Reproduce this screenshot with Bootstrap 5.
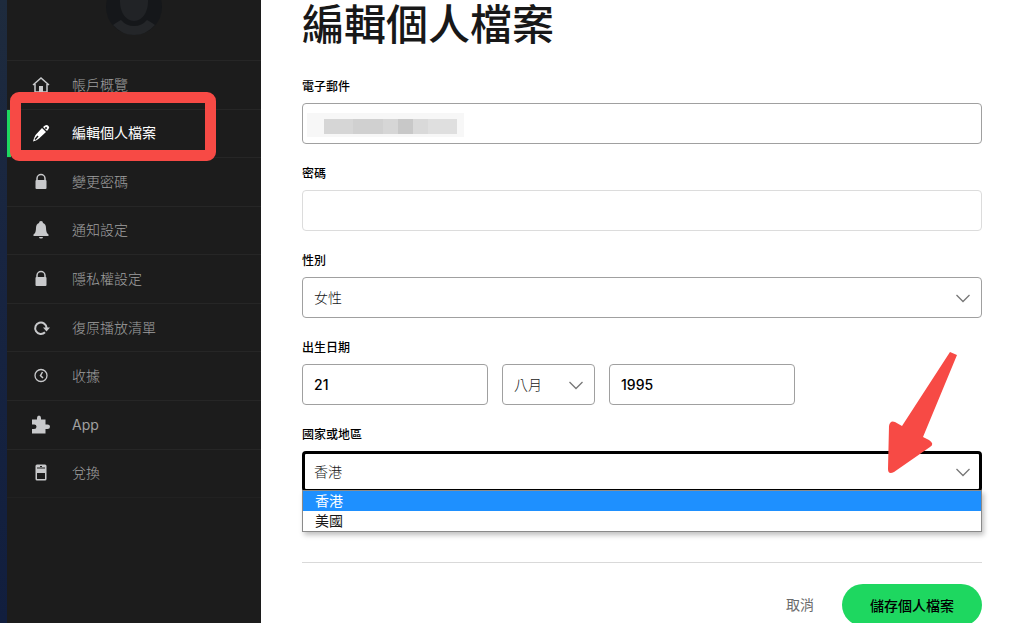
<!DOCTYPE html>
<html lang="zh-Hant">
<head>
<meta charset="utf-8">
<meta name="viewport" content="width=device-width, initial-scale=1">
<title>編輯個人檔案</title>
<link href="https://cdn.jsdelivr.net/npm/bootstrap@5.3.0/dist/css/bootstrap.min.css" rel="stylesheet">
<style>
  body { font-family: Inter, "Noto Sans CJK TC", sans-serif; font-size: 14px; line-height: 20px; color: #181818; }
  .shell { height: 100vh; }
  .edge { width: 7px; background: linear-gradient(#1e2b3d, #182541 40%, #111e3e); }
  .side { width: 254px; background: #1c1c1c; }
  .avatar-area { height: 60px; }
  .side-menu { height: 438px; }
  .side-menu li { border-top: 1px solid #262626; flex: 1 1 0; }
  .side-menu li:last-child { border-bottom: 1px solid #212121; }
  .side-menu a { color: #a0a0a0; padding-left: 24px; gap: 21px; font-weight: 300; }
  .side-menu a.current { color: #fff; font-weight: 400; box-shadow: inset 4px 0 #1ed760; }
  .side-menu svg { width: 20px; height: 20px; fill: #c8c9cb; stroke: none; }
  .side-menu .line { fill: none; stroke: #c8c9cb; }
  .ring { inset: -18px 45px -4px 3px; border: 11px solid #f74a45; border-radius: 9px; pointer-events: none; z-index: 2; }
  .content { padding: 0 42px 0 41px; }
  h1 { font-size: 42px; line-height: 50px; font-weight: 500; margin-bottom: 27px; }
  .field { margin-bottom: 20px; }
  .form-label, legend.form-label { font-size: 12px; line-height: 20px; font-weight: 500; margin-bottom: 6px; float: none; color: #000; }
  .form-control, .form-select { height: 41px; font-size: 14px; line-height: 20px; padding: 9px 11px; border: 1px solid #a0a0a0; border-radius: 4px; color: #000; }
  .form-control { font-weight: 500; }
  .form-control.soft { border-color: #dcdcdc; }
  .form-select { font-weight: 300; padding-right: 36px; color: #181818; background-position: right 10px center; background-size: 16px 16px;
    background-image: url("data:image/svg+xml,%3Csvg xmlns='http://www.w3.org/2000/svg' viewBox='0 0 16 16'%3E%3Cpath d='M1.500 5l6.500 6.500L14.500 5' fill='none' stroke='%23777' stroke-width='1.300'/%3E%3C/svg%3E"); }
  .form-select.open { border: 3px solid #000; padding: 7px 33px 7px 9px; background-position: right 8px center; }
  .masked { left: 5px; top: 10px; width: 157px; height: 24px; background: #f7f7f7; padding: 6px 7px 3px 17px; }
  .options { top: 39px; z-index: 2; background: #fff; border: 1px solid #8a8a8a; box-shadow: 2px 3px 5px rgba(0,0,0,.25); }
  .options li { padding-left: 12px; }
  .options .chosen { background: #1e90ff; color: #fff; }
  .pointer { width: 80px; height: 130px; right: 20px; top: -105px; z-index: 3; pointer-events: none; }
  .year, .day { width: 186px; }
  .month { width: 93px; }
  .actions { border-top: 1px solid #d9d9d9; margin-top: 70px; padding-top: 21px; gap: 28px; }
  .actions a { color: #6a6a6a; }
  .btn-save { height: 42px; padding: 0 28px; border-radius: 21px; font-size: 14px; font-weight: 500; background: #1ed760; color: #000; }
</style>
</head>
<body>
<div class="shell d-flex overflow-hidden">
  <div class="edge flex-shrink-0"></div>
  <aside class="side flex-shrink-0">
    <div class="avatar-area d-flex justify-content-center align-items-start">
      <svg width="56" height="35" viewBox="0 21 56 35" aria-hidden="true">
        <circle cx="28" cy="28" r="28" fill="#15171a"/>
        <path d="M14 23C14 32 19 42 28 42S42 32 42 23V0H14Z" fill="#212326"/>
        <path d="M7 46Q11 43 15 41Q20 47 28 47T41 41Q45 43 49 46Q40 56 28 56T7 46Z" fill="#242629"/>
      </svg>
    </div>
    <nav>
      <ul class="side-menu list-unstyled d-flex flex-column mb-0">
        <li><a href="#" class="d-flex h-100 align-items-center text-decoration-none">
          <svg viewBox="0 0 20 20"><path class="line" stroke-width="1.500" d="M2 10L10 3L18 10M4 9V17H16V9"/><path d="M8 11H12V17H8Z"/></svg>帳戶概覽</a></li>
        <li class="position-relative"><a href="#" class="current d-flex h-100 align-items-center text-decoration-none" aria-current="page">
          <svg viewBox="0 0 20 20"><path fill="#fff" d="M11 5L15 9L8 15.500Q6 17.500 2 18.500Q3 14.500 4.500 12ZM12 4L14 2.500Q16 1.500 17.500 3T17.500 6L16 8Z"/><path d="M4 16.500L7 13" stroke="#1c1c1c" stroke-width="1.500"/><circle cx="15" cy="5" r="1" fill="#1c1c1c"/></svg>編輯個人檔案</a>
          <div class="ring position-absolute"></div></li>
        <li><a href="#" class="d-flex h-100 align-items-center text-decoration-none">
          <svg viewBox="0 0 20 20"><path class="line" stroke-width="1.500" d="M6 9V6.500a4 4 0 0 1 8 0V9"/><rect x="4.500" y="8" width="11" height="9" rx="1"/></svg>變更密碼</a></li>
        <li><a href="#" class="d-flex h-100 align-items-center text-decoration-none">
          <svg viewBox="0 0 20 20"><path d="M10 1Q12 1 12 3Q15 4 15 8Q15 13 17.500 14.500V16H2.500V14.500Q5 13 5 8Q5 4 8 3Q8 1 10 1ZM8 17H12Q12 18.500 10 18.500T8 17Z"/></svg>通知設定</a></li>
        <li><a href="#" class="d-flex h-100 align-items-center text-decoration-none">
          <svg viewBox="0 0 20 20"><path class="line" stroke-width="1.500" d="M6 9V6.500a4 4 0 0 1 8 0V9"/><rect x="4.500" y="8" width="11" height="9" rx="1"/></svg>隱私權設定</a></li>
        <li><a href="#" class="d-flex h-100 align-items-center text-decoration-none">
          <svg viewBox="0 0 20 20"><path class="line" stroke-width="2" d="M14 14.200A5.700 5.700 0 1 1 15.600 10"/><path d="M12 9.500H19L15.500 13.500Z"/></svg>復原播放清單</a></li>
        <li><a href="#" class="d-flex h-100 align-items-center text-decoration-none">
          <svg viewBox="0 0 20 20"><circle class="line" cx="10" cy="9.500" r="6" stroke-width="1.300"/><path class="line" stroke-width="1.500" d="M11.500 6L9.500 9.500L12 12"/></svg>收據</a></li>
        <li><a href="#" class="d-flex h-100 align-items-center text-decoration-none fw-normal">
          <svg viewBox="0 0 20 20"><path d="M1 4.500H6V3Q6 .500 8 .500T10 3V4.500H14.500V9.500H16.500Q19 9.500 19 11.700T16.500 14H14.500V18.500H1V14H3Q5.500 14 5.500 11.700T3 9.500H1Z"/></svg>App</a></li>
        <li><a href="#" class="d-flex h-100 align-items-center text-decoration-none">
          <svg viewBox="0 0 20 20"><path fill-rule="evenodd" d="M6 1.500H14Q15.500 1.500 15.500 3V16Q15.500 17.500 14 17.500H6Q4.500 17.500 4.500 16V3Q4.500 1.500 6 1.500ZM6 10V16H14V10Z"/><path d="M6 5H14M9 3.500H11" stroke="#1c1c1c" stroke-width="1"/></svg>兌換</a></li>
      </ul>
    </nav>
  </aside>

  <main class="content flex-grow-1">
    <h1>編輯個人檔案</h1>
    <form>
      <div class="field">
        <label class="form-label d-block" for="email">電子郵件</label>
        <div class="position-relative">
          <input class="form-control" id="email" type="email">
          <div class="masked position-absolute d-flex" aria-hidden="true">
            <i style="flex:29;background:#d6d6d6"></i><i style="flex:30;background:#d0d0d0"></i><i style="flex:15;background:#d6d6d6"></i><i style="flex:15;background:#c8c8c8"></i><i style="flex:15;background:#d9d9d9"></i><i style="flex:29;background:#dfdfdf"></i>
          </div>
        </div>
      </div>
      <div class="field">
        <label class="form-label d-block" for="password">密碼</label>
        <input class="form-control soft" id="password" type="password">
      </div>
      <div class="field">
        <label class="form-label d-block" for="gender">性別</label>
        <select class="form-select" id="gender"><option>女性</option></select>
      </div>
      <fieldset class="field">
        <legend class="form-label">出生日期</legend>
        <div class="d-flex" style="gap:14px">
          <input class="form-control day" type="text" value="21" aria-label="日">
          <select class="form-select month" aria-label="月"><option>八月</option></select>
          <input class="form-control year" type="text" value="1995" aria-label="年">
        </div>
      </fieldset>
      <div>
        <label class="form-label d-block" for="country">國家或地區</label>
        <div class="position-relative">
          <select class="form-select open" id="country"><option selected>香港</option><option>美國</option></select>
          <ul class="options list-unstyled position-absolute w-100 mb-0">
            <li class="chosen">香港</li>
            <li>美國</li>
          </ul>
          <svg class="pointer position-absolute" viewBox="0 0 80 130" aria-hidden="true">
            <path d="M68 6L75 9L41 91L47 94Q53 98 48 101L12 126Q6 129 6 123L7 80Q8 74 13 76L20 80Z" fill="#f74a45"/>
          </svg>
        </div>
      </div>
      <div class="actions d-flex justify-content-end align-items-center">
        <a href="#" class="text-decoration-none">取消</a>
        <button type="submit" class="btn btn-save border-0">儲存個人檔案</button>
      </div>
    </form>
  </main>
</div>
<script src="https://cdn.jsdelivr.net/npm/bootstrap@5.3.0/dist/js/bootstrap.bundle.min.js"></script>
</body>
</html>
